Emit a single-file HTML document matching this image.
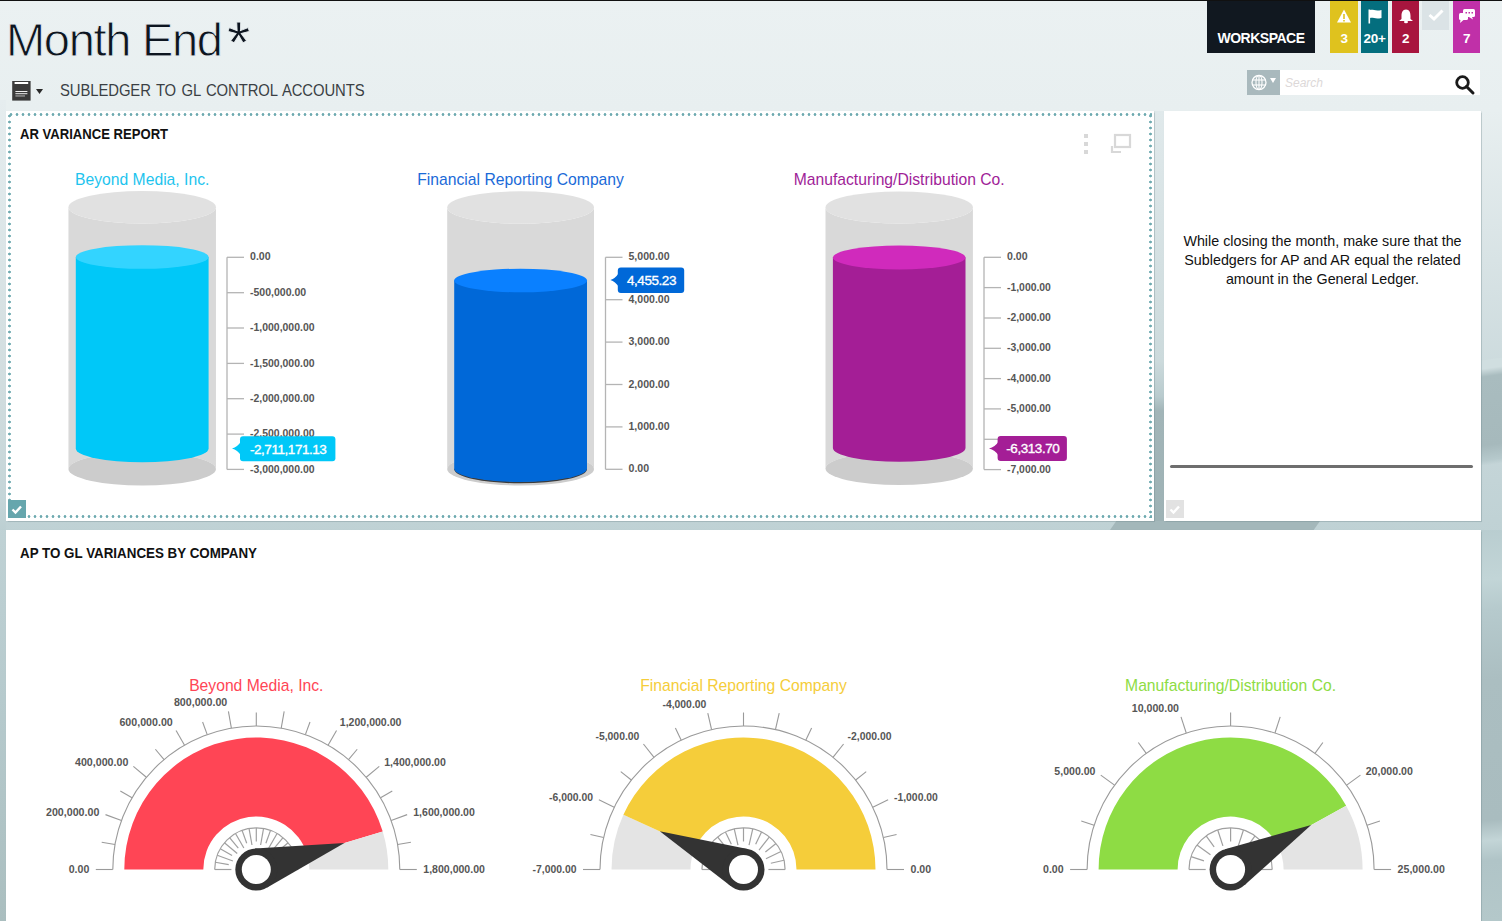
<!DOCTYPE html><html><head><meta charset="utf-8"><style>
*{margin:0;padding:0;box-sizing:border-box}
html,body{width:1502px;height:921px;overflow:hidden}
body{position:relative;font-family:"Liberation Sans",sans-serif;
background:linear-gradient(180deg,#ebf1f2 0px,#e8eff0 110px,#d8e3e5 260px,#c9d8db 400px,#c0d2d5 520px,#b6cacd 700px,#aabebf 921px);}
.abs{position:absolute}
.panel{position:absolute;background:#fff;box-shadow:0 0 1px 0.5px rgba(110,135,140,.35)}
</style></head><body><div class="abs" style="left:6px;top:13px;font-size:47px;line-height:54px;color:#0d1520;letter-spacing:-1.3px;white-space:nowrap;-webkit-text-stroke:0.85px #e9eff1">Month End</div><div class="abs" style="left:227px;top:16px;font-size:60px;line-height:54px;color:#0d1520;-webkit-text-stroke:0.8px #e9eff1">*</div><svg class="abs" style="left:10px;top:79px" width="40" height="24" viewBox="0 0 40 24"><rect x="2.2" y="2" width="18.4" height="19.6" fill="#3a3a3a"/><rect x="4.6" y="3" width="13.6" height="2" fill="#fff"/><rect x="5.4" y="12" width="12" height="1" fill="#eee"/><rect x="5.4" y="14.2" width="12" height="1" fill="#eee"/><rect x="5.4" y="16.4" width="9.6" height="1.1" fill="#aaa"/><path d="M26 10 L33 10 L29.5 15 Z" fill="#2a2a2a"/></svg><div class="abs" style="left:60px;top:80px;font-size:16.5px;line-height:20px;color:#3a3f44;white-space:nowrap;letter-spacing:-0.1px;word-spacing:1.5px;transform:scaleX(0.9);transform-origin:0 0">SUBLEDGER TO GL CONTROL ACCOUNTS</div><div class="abs" style="left:1207px;top:0;width:108px;height:53px;background:#111820;color:#fff;font-weight:bold;font-size:14px;text-align:center;line-height:14px;padding-top:31px;letter-spacing:-0.5px">WORKSPACE</div><div class="abs" style="left:1330px;top:0;width:28px;height:53px;background:#dfc21e"><svg class="abs" style="left:6px;top:8px" width="16" height="16" viewBox="0 0 16 16"><path d="M8 1.5 L15 14.5 L1 14.5 Z" fill="#fff"/><rect x="7.2" y="6" width="1.6" height="5" fill="#dfc21e"/><rect x="7.2" y="12" width="1.6" height="1.5" fill="#dfc21e"/></svg><div class="abs" style="left:0;top:30px;width:28px;text-align:center;color:#fff;font-size:13.5px;font-weight:bold;line-height:16px;margin-top:1px;letter-spacing:-0.3px">3</div></div><div class="abs" style="left:1361px;top:0;width:27px;height:53px;background:#046e7e"><svg class="abs" style="left:6px;top:8px" width="16" height="16" viewBox="0 0 16 16"><rect x="1.5" y="1.5" width="1.6" height="14" fill="#fff"/><path d="M3 2 C6 1,8 3.5,14.5 2 L14.5 10 C8 11.5,6 9,3 10 Z" fill="#fff"/></svg><div class="abs" style="left:0;top:30px;width:27px;text-align:center;color:#fff;font-size:13.5px;font-weight:bold;line-height:16px;margin-top:1px;letter-spacing:-0.3px">20+</div></div><div class="abs" style="left:1392px;top:0;width:27px;height:53px;background:#a8153e"><svg class="abs" style="left:5px;top:8px" width="18" height="16" viewBox="0 0 18 16"><path d="M9 1.5 C5.5 1.5,4.5 4.5,4.5 8 L4.5 11 L2 13 L16 13 L13.5 11 L13.5 8 C13.5 4.5,12.5 1.5,9 1.5 Z" fill="#fff"/><ellipse cx="9" cy="14" rx="2" ry="1.3" fill="#fff"/></svg><div class="abs" style="left:0;top:30px;width:27px;text-align:center;color:#fff;font-size:13.5px;font-weight:bold;line-height:16px;margin-top:1px;letter-spacing:-0.3px">2</div></div><div class="abs" style="left:1422px;top:0;width:27px;height:30px;background:#dbe3e6"><svg class="abs" style="left:6px;top:8px" width="16" height="14" viewBox="0 0 16 14"><path d="M1.5 7 L6 11 L14.5 2.5" stroke="#fff" stroke-width="3" fill="none"/></svg></div><div class="abs" style="left:1453px;top:0;width:27px;height:53px;background:#c030a8"><svg class="abs" style="left:5px;top:8px" width="18" height="16" viewBox="0 0 18 16"><rect x="5" y="1" width="12" height="8" rx="1.5" fill="#fff"/><path d="M14 9 L15 11.5 L11 9Z" fill="#fff"/><rect x="1" y="5" width="9" height="7" rx="1.5" fill="#fff"/><path d="M2.5 12 L2 15 L5.5 12Z" fill="#fff"/><rect x="7.5" y="4" width="1.5" height="1.5" fill="#c030a8"/><rect x="10.5" y="4" width="1.5" height="1.5" fill="#c030a8"/><rect x="13.5" y="4" width="1.5" height="1.5" fill="#c030a8"/></svg><div class="abs" style="left:0;top:30px;width:27px;text-align:center;color:#fff;font-size:13.5px;font-weight:bold;line-height:16px;margin-top:1px;letter-spacing:-0.3px">7</div></div><div class="abs" style="left:0;top:0;width:1502px;height:1px;background:#111"></div><div class="abs" style="left:1247px;top:70px;width:233px;height:25px;background:#fff"></div><div class="abs" style="left:1247px;top:70px;width:33px;height:25px;background:#a9b9bd"></div><svg class="abs" style="left:1250px;top:73px" width="34" height="20" viewBox="0 0 34 20"><circle cx="9" cy="9.5" r="7" fill="none" stroke="#fff" stroke-width="1.3"/><ellipse cx="9" cy="9.5" rx="3" ry="7" fill="none" stroke="#fff" stroke-width="1.1"/><line x1="2" y1="7" x2="16" y2="7" stroke="#fff" stroke-width="1.1"/><line x1="2" y1="12" x2="16" y2="12" stroke="#fff" stroke-width="1.1"/><line x1="9" y1="2.5" x2="9" y2="16.5" stroke="#fff" stroke-width="1.1"/><path d="M20 5 L26 5 L23 10Z" fill="#fff"/></svg><div class="abs" style="left:1285px;top:76px;font-size:12px;line-height:15px;color:#dcd8d8;font-style:italic">Search</div><svg class="abs" style="left:1454px;top:74px" width="22" height="22" viewBox="0 0 22 22"><circle cx="8.5" cy="8.5" r="5.8" fill="none" stroke="#1a1a1a" stroke-width="2.8"/><line x1="12.5" y1="12.5" x2="19" y2="19" stroke="#1a1a1a" stroke-width="3" stroke-linecap="round"/></svg><div class="abs" style="left:0;top:100px;width:6px;height:430px;background:linear-gradient(180deg,#e6edef 0px,#dbe5e7 150px,#d0dcde 300px,#c4d5d8 400px,#bccfd2 430px)"></div><div class="abs" style="left:1481px;top:530px;width:21px;height:391px;background:linear-gradient(175deg,#b9cdd0 0px,#c2d5d7 50px,#b6cacd 80px,#abbec1 150px,#a9bcbf 290px,#c3d5d7 310px,#b0c4c7 330px,#b4c8ca 391px)"></div><div class="abs" style="left:1154px;top:111px;width:10px;height:410px;background:linear-gradient(180deg,#e0e9eb 0px,#ccdadc 250px,#b9cbce 285px,#a2b5b8 300px,#9eb2b5 410px)"></div><div class="abs" style="left:1481px;top:355px;width:21px;height:110px;background:linear-gradient(172deg,rgba(0,0,0,0) 0px,rgba(0,0,0,0) 5px,#d0dee0 6px,#d0dee0 14px,#a9bcbf 22px,#a6b9bc 90px,#b6c9cc 105px,rgba(0,0,0,0) 110px)"></div><div class="abs" style="left:1110px;top:521px;width:210px;height:9px;background:#a3b7ba;clip-path:polygon(3% 0,100% 0,97% 100%,0 100%)"></div><div class="panel" style="left:6px;top:111px;width:1148px;height:410px"></div><div class="abs" style="left:8px;top:113px;width:1144px;height:405px;background:radial-gradient(circle,#6eaab0 1.0px,rgba(110,170,176,0) 1.75px) 0 0/6px 3px repeat-x,radial-gradient(circle,#6eaab0 1.0px,rgba(110,170,176,0) 1.75px) 0 100%/6px 3px repeat-x,radial-gradient(circle,#6eaab0 1.0px,rgba(110,170,176,0) 1.75px) 0 0/3px 6px repeat-y,radial-gradient(circle,#6eaab0 1.0px,rgba(110,170,176,0) 1.75px) 100% 0/3px 6px repeat-y"></div><div class="abs" style="left:20px;top:126px;font-size:14px;line-height:16px;font-weight:bold;color:#111;white-space:nowrap;transform:scaleX(0.935);transform-origin:0 0">AR VARIANCE REPORT</div><svg class="abs" style="left:1080px;top:130px" width="60" height="30" viewBox="0 0 60 30"><rect x="4" y="4" width="4" height="4" fill="#d8d8d8"/><rect x="4" y="12" width="4" height="4" fill="#d8d8d8"/><rect x="4" y="20" width="4" height="4" fill="#d8d8d8"/><rect x="35" y="5" width="15" height="12" fill="none" stroke="#d8d8d8" stroke-width="2.2"/><path d="M32 16 L32 22 L41 22" fill="none" stroke="#d8d8d8" stroke-width="2.2"/></svg><div class="abs" style="left:8px;top:500px;width:18px;height:18px;background:#66a6ad"></div><svg class="abs" style="left:8px;top:500px" width="18" height="18" viewBox="0 0 18 18"><path d="M4.5 9.5 L7.5 12.5 L13 6.5" stroke="#fff" stroke-width="2.4" fill="none"/></svg><div class="panel" style="left:1164px;top:111px;width:317px;height:410px"></div><div class="abs" style="left:1164px;top:232px;width:317px;text-align:center;font-size:14.3px;line-height:19px;color:#111">While closing the month, make sure that the<br>Subledgers for AP and AR equal the related<br>amount in the General Ledger.</div><div class="abs" style="left:1170px;top:465px;width:303px;height:3px;border-radius:2px;background:#6e6e6e"></div><div class="abs" style="left:1166px;top:500px;width:18px;height:18px;background:#e2e2e2"></div><svg class="abs" style="left:1166px;top:500px" width="18" height="18" viewBox="0 0 18 18"><path d="M4.5 9.5 L7.5 12.5 L13 6.5" stroke="#fff" stroke-width="2.4" fill="none"/></svg><div class="panel" style="left:6px;top:530px;width:1475px;height:400px"></div><div class="abs" style="left:20px;top:545px;font-size:14px;line-height:16px;font-weight:bold;color:#111;transform:scaleX(0.955);transform-origin:0 0;white-space:nowrap">AP TO GL VARIANCES BY COMPANY</div><svg class="abs" style="left:0;top:0" width="1502" height="921" viewBox="0 0 1502 921"><path d="M68.45 207.30 L68.45 469.00 A73.75 16.50 0 0 1 215.95 469.00 L215.95 207.30 A73.75 16.20 0 0 1 68.45 207.30 Z" fill="#d9d9d9"/><ellipse cx="142.20" cy="469.00" rx="73.75" ry="16.50" fill="#cccccc"/><ellipse cx="142.20" cy="207.30" rx="73.75" ry="16.20" fill="#e1e1e1"/><path d="M75.80 257.00 L75.80 448.50 A66.40 13.70 0 0 0 208.60 448.50 L208.60 257.00 Z" fill="#00c8f8"/><ellipse cx="142.20" cy="257.00" rx="66.40" ry="11.80" fill="#33d4ff"/><text x="142.20" y="184.70" text-anchor="middle" font-family="Liberation Sans" font-size="15.7" fill="#1ec4ee">Beyond Media, Inc.</text><path d="M227.0 257.3 L227.0 469.4" stroke="#b4b4b4" stroke-width="1.3" fill="none"/><path d="M227.0 257.3 L244.0 257.3" stroke="#b4b4b4" stroke-width="1.3" fill="none"/><text x="250.0" y="260.4" font-family="Liberation Sans" font-weight="bold" font-size="10" fill="#565656" textLength="20.6" lengthAdjust="spacingAndGlyphs">0.00</text><path d="M227.0 292.7 L244.0 292.7" stroke="#b4b4b4" stroke-width="1.3" fill="none"/><text x="250.0" y="295.8" font-family="Liberation Sans" font-weight="bold" font-size="10" fill="#565656" textLength="56.2" lengthAdjust="spacingAndGlyphs">-500,000.00</text><path d="M227.0 328.0 L244.0 328.0" stroke="#b4b4b4" stroke-width="1.3" fill="none"/><text x="250.0" y="331.1" font-family="Liberation Sans" font-weight="bold" font-size="10" fill="#565656" textLength="64.5" lengthAdjust="spacingAndGlyphs">-1,000,000.00</text><path d="M227.0 363.4 L244.0 363.4" stroke="#b4b4b4" stroke-width="1.3" fill="none"/><text x="250.0" y="366.5" font-family="Liberation Sans" font-weight="bold" font-size="10" fill="#565656" textLength="64.5" lengthAdjust="spacingAndGlyphs">-1,500,000.00</text><path d="M227.0 398.7 L244.0 398.7" stroke="#b4b4b4" stroke-width="1.3" fill="none"/><text x="250.0" y="401.8" font-family="Liberation Sans" font-weight="bold" font-size="10" fill="#565656" textLength="64.5" lengthAdjust="spacingAndGlyphs">-2,000,000.00</text><path d="M227.0 434.1 L244.0 434.1" stroke="#b4b4b4" stroke-width="1.3" fill="none"/><text x="250.0" y="437.2" font-family="Liberation Sans" font-weight="bold" font-size="10" fill="#565656" textLength="64.5" lengthAdjust="spacingAndGlyphs">-2,500,000.00</text><path d="M227.0 469.4 L244.0 469.4" stroke="#b4b4b4" stroke-width="1.3" fill="none"/><text x="250.0" y="472.5" font-family="Liberation Sans" font-weight="bold" font-size="10" fill="#565656" textLength="64.5" lengthAdjust="spacingAndGlyphs">-3,000,000.00</text><rect x="240.0" y="436.3" width="95.4" height="25.0" rx="3" fill="#00c8f8"/><path d="M241.0 441.6 Q237.5 447.1 232.0 448.6 Q237.5 450.1 241.0 455.6 Z" fill="#00c8f8"/><text x="288.2" y="453.7" text-anchor="middle" font-family="Liberation Sans" font-size="13.5" letter-spacing="-0.45" fill="#fff" stroke="#fff" stroke-width="0.35">-2,711,171.13</text><path d="M447.20 207.50 L447.20 469.00 A73.40 16.50 0 0 1 594.00 469.00 L594.00 207.50 A73.40 16.20 0 0 1 447.20 207.50 Z" fill="#d9d9d9"/><ellipse cx="520.60" cy="469.00" rx="73.40" ry="16.50" fill="#cccccc"/><ellipse cx="520.60" cy="207.50" rx="73.40" ry="16.20" fill="#e1e1e1"/><path d="M455.00 468.80 A65.60 13.60 0 0 0 586.20 468.80" fill="none" stroke="#2b2b2b" stroke-width="1.8" opacity=".9"/><path d="M454.20 280.50 L454.20 468.50 A66.40 13.50 0 0 0 587.00 468.50 L587.00 280.50 Z" fill="#0068d8"/><ellipse cx="520.60" cy="280.50" rx="66.40" ry="11.80" fill="#0a80ff"/><text x="520.60" y="184.70" text-anchor="middle" font-family="Liberation Sans" font-size="15.7" fill="#1a6ad8">Financial Reporting Company</text><path d="M605.5 257.3 L605.5 469.3" stroke="#b4b4b4" stroke-width="1.3" fill="none"/><path d="M605.5 257.3 L622.5 257.3" stroke="#b4b4b4" stroke-width="1.3" fill="none"/><text x="628.5" y="260.4" font-family="Liberation Sans" font-weight="bold" font-size="10" fill="#565656" textLength="41.1" lengthAdjust="spacingAndGlyphs">5,000.00</text><path d="M605.5 299.7 L622.5 299.7" stroke="#b4b4b4" stroke-width="1.3" fill="none"/><text x="628.5" y="302.8" font-family="Liberation Sans" font-weight="bold" font-size="10" fill="#565656" textLength="41.1" lengthAdjust="spacingAndGlyphs">4,000.00</text><path d="M605.5 342.1 L622.5 342.1" stroke="#b4b4b4" stroke-width="1.3" fill="none"/><text x="628.5" y="345.2" font-family="Liberation Sans" font-weight="bold" font-size="10" fill="#565656" textLength="41.1" lengthAdjust="spacingAndGlyphs">3,000.00</text><path d="M605.5 384.5 L622.5 384.5" stroke="#b4b4b4" stroke-width="1.3" fill="none"/><text x="628.5" y="387.6" font-family="Liberation Sans" font-weight="bold" font-size="10" fill="#565656" textLength="41.1" lengthAdjust="spacingAndGlyphs">2,000.00</text><path d="M605.5 426.9 L622.5 426.9" stroke="#b4b4b4" stroke-width="1.3" fill="none"/><text x="628.5" y="430.0" font-family="Liberation Sans" font-weight="bold" font-size="10" fill="#565656" textLength="41.1" lengthAdjust="spacingAndGlyphs">1,000.00</text><path d="M605.5 469.3 L622.5 469.3" stroke="#b4b4b4" stroke-width="1.3" fill="none"/><text x="628.5" y="472.4" font-family="Liberation Sans" font-weight="bold" font-size="10" fill="#565656" textLength="20.6" lengthAdjust="spacingAndGlyphs">0.00</text><rect x="617.8" y="267.5" width="66.4" height="25.5" rx="3" fill="#0068d8"/><path d="M618.8 273.0 Q615.3 278.5 610.4 280.0 Q615.3 281.5 618.8 287.0 Z" fill="#0068d8"/><text x="651.5" y="285.1" text-anchor="middle" font-family="Liberation Sans" font-size="13.5" letter-spacing="-0.45" fill="#fff" stroke="#fff" stroke-width="0.35">4,455.23</text><path d="M825.50 207.50 L825.50 468.50 A73.70 16.50 0 0 1 972.90 468.50 L972.90 207.50 A73.70 16.10 0 0 1 825.50 207.50 Z" fill="#d9d9d9"/><ellipse cx="899.20" cy="468.50" rx="73.70" ry="16.50" fill="#cccccc"/><ellipse cx="899.20" cy="207.50" rx="73.70" ry="16.10" fill="#e1e1e1"/><path d="M832.90 257.50 L832.90 448.00 A66.30 13.70 0 0 0 965.50 448.00 L965.50 257.50 Z" fill="#a41e96"/><ellipse cx="899.20" cy="257.50" rx="66.30" ry="12.00" fill="#d02abc"/><text x="899.20" y="184.70" text-anchor="middle" font-family="Liberation Sans" font-size="15.7" fill="#a01e98">Manufacturing/Distribution Co.</text><path d="M984.0 257.3 L984.0 469.6" stroke="#b4b4b4" stroke-width="1.3" fill="none"/><path d="M984.0 257.3 L1001.0 257.3" stroke="#b4b4b4" stroke-width="1.3" fill="none"/><text x="1007.0" y="260.4" font-family="Liberation Sans" font-weight="bold" font-size="10" fill="#565656" textLength="20.6" lengthAdjust="spacingAndGlyphs">0.00</text><path d="M984.0 287.6 L1001.0 287.6" stroke="#b4b4b4" stroke-width="1.3" fill="none"/><text x="1007.0" y="290.7" font-family="Liberation Sans" font-weight="bold" font-size="10" fill="#565656" textLength="43.9" lengthAdjust="spacingAndGlyphs">-1,000.00</text><path d="M984.0 318.0 L1001.0 318.0" stroke="#b4b4b4" stroke-width="1.3" fill="none"/><text x="1007.0" y="321.1" font-family="Liberation Sans" font-weight="bold" font-size="10" fill="#565656" textLength="43.9" lengthAdjust="spacingAndGlyphs">-2,000.00</text><path d="M984.0 348.3 L1001.0 348.3" stroke="#b4b4b4" stroke-width="1.3" fill="none"/><text x="1007.0" y="351.4" font-family="Liberation Sans" font-weight="bold" font-size="10" fill="#565656" textLength="43.9" lengthAdjust="spacingAndGlyphs">-3,000.00</text><path d="M984.0 378.6 L1001.0 378.6" stroke="#b4b4b4" stroke-width="1.3" fill="none"/><text x="1007.0" y="381.7" font-family="Liberation Sans" font-weight="bold" font-size="10" fill="#565656" textLength="43.9" lengthAdjust="spacingAndGlyphs">-4,000.00</text><path d="M984.0 408.9 L1001.0 408.9" stroke="#b4b4b4" stroke-width="1.3" fill="none"/><text x="1007.0" y="412.1" font-family="Liberation Sans" font-weight="bold" font-size="10" fill="#565656" textLength="43.9" lengthAdjust="spacingAndGlyphs">-5,000.00</text><path d="M984.0 439.3 L1001.0 439.3" stroke="#b4b4b4" stroke-width="1.3" fill="none"/><path d="M984.0 469.6 L1001.0 469.6" stroke="#b4b4b4" stroke-width="1.3" fill="none"/><text x="1007.0" y="472.7" font-family="Liberation Sans" font-weight="bold" font-size="10" fill="#565656" textLength="43.9" lengthAdjust="spacingAndGlyphs">-7,000.00</text><rect x="997.6" y="436.0" width="69.3" height="25.0" rx="3" fill="#a41e96"/><path d="M998.6 441.6 Q995.1 447.1 989.0 448.6 Q995.1 450.1 998.6 455.6 Z" fill="#a41e96"/><text x="1032.8" y="453.4" text-anchor="middle" font-family="Liberation Sans" font-size="13.5" letter-spacing="-0.45" fill="#fff" stroke="#fff" stroke-width="0.35">-6,313.70</text><path d="M124.30 869.50 A132 132 0 0 1 382.73 831.57 L307.06 854.27 A53 53 0 0 0 203.30 869.50 Z" fill="#ff4555"/><path d="M382.73 831.57 A132 132 0 0 1 388.30 869.50 L309.30 869.50 A53 53 0 0 0 307.06 854.27 Z" fill="#e4e4e4"/><path d="M112.80 869.50 A143.5 143.5 0 0 1 399.80 869.50" fill="none" stroke="#9a9a9a" stroke-width="1.1"/><path d="M112.80 869.50 L95.80 869.50" stroke="#9a9a9a" stroke-width="1.1"/><path d="M114.98 844.58 L101.69 842.24" stroke="#9a9a9a" stroke-width="1.1"/><path d="M121.45 820.42 L105.48 814.61" stroke="#9a9a9a" stroke-width="1.1"/><path d="M132.03 797.75 L120.33 791.00" stroke="#9a9a9a" stroke-width="1.1"/><path d="M146.37 777.26 L133.35 766.33" stroke="#9a9a9a" stroke-width="1.1"/><path d="M164.06 759.57 L155.38 749.23" stroke="#9a9a9a" stroke-width="1.1"/><path d="M184.55 745.23 L176.05 730.50" stroke="#9a9a9a" stroke-width="1.1"/><path d="M207.22 734.65 L202.60 721.97" stroke="#9a9a9a" stroke-width="1.1"/><path d="M231.38 728.18 L228.43 711.44" stroke="#9a9a9a" stroke-width="1.1"/><path d="M256.30 726.00 L256.30 712.50" stroke="#9a9a9a" stroke-width="1.1"/><path d="M281.22 728.18 L284.17 711.44" stroke="#9a9a9a" stroke-width="1.1"/><path d="M305.38 734.65 L310.00 721.97" stroke="#9a9a9a" stroke-width="1.1"/><path d="M328.05 745.23 L336.55 730.50" stroke="#9a9a9a" stroke-width="1.1"/><path d="M348.54 759.57 L357.22 749.23" stroke="#9a9a9a" stroke-width="1.1"/><path d="M366.23 777.26 L379.25 766.33" stroke="#9a9a9a" stroke-width="1.1"/><path d="M380.57 797.75 L392.27 791.00" stroke="#9a9a9a" stroke-width="1.1"/><path d="M391.15 820.42 L407.12 814.61" stroke="#9a9a9a" stroke-width="1.1"/><path d="M397.62 844.58 L410.91 842.24" stroke="#9a9a9a" stroke-width="1.1"/><path d="M399.80 869.50 L416.80 869.50" stroke="#9a9a9a" stroke-width="1.1"/><text x="89.30" y="873.00" text-anchor="end" font-family="Liberation Sans" font-weight="bold" font-size="10" fill="#565656" textLength="20.6" lengthAdjust="spacingAndGlyphs">0.00</text><text x="99.37" y="815.88" text-anchor="end" font-family="Liberation Sans" font-weight="bold" font-size="10" fill="#565656" textLength="53.4" lengthAdjust="spacingAndGlyphs">200,000.00</text><text x="128.37" y="765.65" text-anchor="end" font-family="Liberation Sans" font-weight="bold" font-size="10" fill="#565656" textLength="53.4" lengthAdjust="spacingAndGlyphs">400,000.00</text><text x="172.80" y="726.07" text-anchor="end" font-family="Liberation Sans" font-weight="bold" font-size="10" fill="#565656" textLength="53.4" lengthAdjust="spacingAndGlyphs">600,000.00</text><text x="227.30" y="706.24" text-anchor="end" font-family="Liberation Sans" font-weight="bold" font-size="10" fill="#565656" textLength="53.4" lengthAdjust="spacingAndGlyphs">800,000.00</text><text x="339.80" y="726.07" text-anchor="start" font-family="Liberation Sans" font-weight="bold" font-size="10" fill="#565656" textLength="61.6" lengthAdjust="spacingAndGlyphs">1,200,000.00</text><text x="384.23" y="765.65" text-anchor="start" font-family="Liberation Sans" font-weight="bold" font-size="10" fill="#565656" textLength="61.6" lengthAdjust="spacingAndGlyphs">1,400,000.00</text><text x="413.23" y="815.88" text-anchor="start" font-family="Liberation Sans" font-weight="bold" font-size="10" fill="#565656" textLength="61.6" lengthAdjust="spacingAndGlyphs">1,600,000.00</text><text x="423.30" y="873.00" text-anchor="start" font-family="Liberation Sans" font-weight="bold" font-size="10" fill="#565656" textLength="61.6" lengthAdjust="spacingAndGlyphs">1,800,000.00</text><path d="M214.70 869.50 A41.6 41.6 0 0 1 297.90 869.50" fill="none" stroke="#a0a0a0" stroke-width="1.2"/><path d="M214.70 869.50 L231.40 869.50" stroke="#a0a0a0" stroke-width="1.2"/><path d="M215.33 862.28 L228.73 864.64" stroke="#a0a0a0" stroke-width="1.2"/><path d="M217.21 855.27 L232.90 860.98" stroke="#a0a0a0" stroke-width="1.2"/><path d="M220.27 848.70 L232.05 855.50" stroke="#a0a0a0" stroke-width="1.2"/><path d="M224.43 842.76 L237.23 853.49" stroke="#a0a0a0" stroke-width="1.2"/><path d="M229.56 837.63 L238.30 848.05" stroke="#a0a0a0" stroke-width="1.2"/><path d="M235.50 833.47 L243.85 847.94" stroke="#a0a0a0" stroke-width="1.2"/><path d="M242.07 830.41 L246.72 843.19" stroke="#a0a0a0" stroke-width="1.2"/><path d="M249.08 828.53 L251.98 844.98" stroke="#a0a0a0" stroke-width="1.2"/><path d="M256.30 827.90 L256.30 841.50" stroke="#a0a0a0" stroke-width="1.2"/><path d="M263.52 828.53 L260.62 844.98" stroke="#a0a0a0" stroke-width="1.2"/><path d="M270.53 830.41 L265.88 843.19" stroke="#a0a0a0" stroke-width="1.2"/><path d="M277.10 833.47 L268.75 847.94" stroke="#a0a0a0" stroke-width="1.2"/><path d="M283.04 837.63 L274.30 848.05" stroke="#a0a0a0" stroke-width="1.2"/><path d="M288.17 842.76 L275.37 853.49" stroke="#a0a0a0" stroke-width="1.2"/><path d="M292.33 848.70 L280.55 855.50" stroke="#a0a0a0" stroke-width="1.2"/><path d="M295.39 855.27 L279.70 860.98" stroke="#a0a0a0" stroke-width="1.2"/><path d="M297.27 862.28 L283.87 864.64" stroke="#a0a0a0" stroke-width="1.2"/><path d="M297.90 869.50 L281.20 869.50" stroke="#a0a0a0" stroke-width="1.2"/><path d="M255.02 848.54 L344.42 843.06 L266.77 887.71 Z" fill="#333"/><circle cx="256.30" cy="869.50" r="21.0" fill="#333"/><circle cx="256.30" cy="869.50" r="14.5" fill="#fff"/><text x="256.30" y="690.6" text-anchor="middle" font-family="Liberation Sans" font-size="15.7" fill="#ff4555">Beyond Media, Inc.</text><path d="M611.50 869.50 A132 132 0 0 1 623.39 814.76 L695.27 847.52 A53 53 0 0 0 690.50 869.50 Z" fill="#e4e4e4"/><path d="M623.39 814.76 A132 132 0 0 1 875.50 869.50 L796.50 869.50 A53 53 0 0 0 695.27 847.52 Z" fill="#f5cd3a"/><path d="M600.00 869.50 A143.5 143.5 0 0 1 887.00 869.50" fill="none" stroke="#9a9a9a" stroke-width="1.1"/><path d="M600.00 869.50 L583.00 869.50" stroke="#9a9a9a" stroke-width="1.1"/><path d="M603.60 837.57 L590.44 834.56" stroke="#9a9a9a" stroke-width="1.1"/><path d="M614.21 807.24 L598.89 799.86" stroke="#9a9a9a" stroke-width="1.1"/><path d="M631.31 780.03 L620.75 771.61" stroke="#9a9a9a" stroke-width="1.1"/><path d="M654.03 757.31 L643.43 744.02" stroke="#9a9a9a" stroke-width="1.1"/><path d="M681.24 740.21 L675.38 728.05" stroke="#9a9a9a" stroke-width="1.1"/><path d="M711.57 729.60 L707.79 713.02" stroke="#9a9a9a" stroke-width="1.1"/><path d="M743.50 726.00 L743.50 712.50" stroke="#9a9a9a" stroke-width="1.1"/><path d="M775.43 729.60 L779.21 713.02" stroke="#9a9a9a" stroke-width="1.1"/><path d="M805.76 740.21 L811.62 728.05" stroke="#9a9a9a" stroke-width="1.1"/><path d="M832.97 757.31 L843.57 744.02" stroke="#9a9a9a" stroke-width="1.1"/><path d="M855.69 780.03 L866.25 771.61" stroke="#9a9a9a" stroke-width="1.1"/><path d="M872.79 807.24 L888.11 799.86" stroke="#9a9a9a" stroke-width="1.1"/><path d="M883.40 837.57 L896.56 834.56" stroke="#9a9a9a" stroke-width="1.1"/><path d="M887.00 869.50 L904.00 869.50" stroke="#9a9a9a" stroke-width="1.1"/><text x="576.50" y="873.00" text-anchor="end" font-family="Liberation Sans" font-weight="bold" font-size="10" fill="#565656" textLength="43.9" lengthAdjust="spacingAndGlyphs">-7,000.00</text><text x="593.04" y="800.54" text-anchor="end" font-family="Liberation Sans" font-weight="bold" font-size="10" fill="#565656" textLength="43.9" lengthAdjust="spacingAndGlyphs">-6,000.00</text><text x="639.38" y="740.13" text-anchor="end" font-family="Liberation Sans" font-weight="bold" font-size="10" fill="#565656" textLength="43.9" lengthAdjust="spacingAndGlyphs">-5,000.00</text><text x="706.34" y="707.89" text-anchor="end" font-family="Liberation Sans" font-weight="bold" font-size="10" fill="#565656" textLength="43.9" lengthAdjust="spacingAndGlyphs">-4,000.00</text><text x="847.62" y="740.13" text-anchor="start" font-family="Liberation Sans" font-weight="bold" font-size="10" fill="#565656" textLength="43.9" lengthAdjust="spacingAndGlyphs">-2,000.00</text><text x="893.96" y="800.54" text-anchor="start" font-family="Liberation Sans" font-weight="bold" font-size="10" fill="#565656" textLength="43.9" lengthAdjust="spacingAndGlyphs">-1,000.00</text><text x="910.50" y="873.00" text-anchor="start" font-family="Liberation Sans" font-weight="bold" font-size="10" fill="#565656" textLength="20.6" lengthAdjust="spacingAndGlyphs">0.00</text><path d="M701.90 869.50 A41.6 41.6 0 0 1 785.10 869.50" fill="none" stroke="#a0a0a0" stroke-width="1.2"/><path d="M701.90 869.50 L718.60 869.50" stroke="#a0a0a0" stroke-width="1.2"/><path d="M702.94 860.24 L716.20 863.27" stroke="#a0a0a0" stroke-width="1.2"/><path d="M706.02 851.45 L721.07 858.70" stroke="#a0a0a0" stroke-width="1.2"/><path d="M710.98 843.56 L721.61 852.04" stroke="#a0a0a0" stroke-width="1.2"/><path d="M717.56 836.98 L727.98 850.03" stroke="#a0a0a0" stroke-width="1.2"/><path d="M725.45 832.02 L731.35 844.27" stroke="#a0a0a0" stroke-width="1.2"/><path d="M734.24 828.94 L737.96 845.22" stroke="#a0a0a0" stroke-width="1.2"/><path d="M743.50 827.90 L743.50 841.50" stroke="#a0a0a0" stroke-width="1.2"/><path d="M752.76 828.94 L749.04 845.22" stroke="#a0a0a0" stroke-width="1.2"/><path d="M761.55 832.02 L755.65 844.27" stroke="#a0a0a0" stroke-width="1.2"/><path d="M769.44 836.98 L759.02 850.03" stroke="#a0a0a0" stroke-width="1.2"/><path d="M776.02 843.56 L765.39 852.04" stroke="#a0a0a0" stroke-width="1.2"/><path d="M780.98 851.45 L765.93 858.70" stroke="#a0a0a0" stroke-width="1.2"/><path d="M784.06 860.24 L770.80 863.27" stroke="#a0a0a0" stroke-width="1.2"/><path d="M785.10 869.50 L768.40 869.50" stroke="#a0a0a0" stroke-width="1.2"/><path d="M730.66 886.12 L659.78 831.35 L747.62 848.91 Z" fill="#333"/><circle cx="743.50" cy="869.50" r="21.0" fill="#333"/><circle cx="743.50" cy="869.50" r="14.5" fill="#fff"/><text x="743.50" y="690.6" text-anchor="middle" font-family="Liberation Sans" font-size="15.7" fill="#f5cd3a">Financial Reporting Company</text><path d="M1098.60 869.50 A132 132 0 0 1 1346.16 805.71 L1277.00 843.89 A53 53 0 0 0 1177.60 869.50 Z" fill="#8edc44"/><path d="M1346.16 805.71 A132 132 0 0 1 1362.60 869.50 L1283.60 869.50 A53 53 0 0 0 1277.00 843.89 Z" fill="#e4e4e4"/><path d="M1087.10 869.50 A143.5 143.5 0 0 1 1374.10 869.50" fill="none" stroke="#9a9a9a" stroke-width="1.1"/><path d="M1087.10 869.50 L1070.10 869.50" stroke="#9a9a9a" stroke-width="1.1"/><path d="M1094.12 825.16 L1081.28 820.98" stroke="#9a9a9a" stroke-width="1.1"/><path d="M1114.51 785.15 L1100.75 775.16" stroke="#9a9a9a" stroke-width="1.1"/><path d="M1146.25 753.41 L1138.32 742.48" stroke="#9a9a9a" stroke-width="1.1"/><path d="M1186.26 733.02 L1181.00 716.86" stroke="#9a9a9a" stroke-width="1.1"/><path d="M1230.60 726.00 L1230.60 712.50" stroke="#9a9a9a" stroke-width="1.1"/><path d="M1274.94 733.02 L1280.20 716.86" stroke="#9a9a9a" stroke-width="1.1"/><path d="M1314.95 753.41 L1322.88 742.48" stroke="#9a9a9a" stroke-width="1.1"/><path d="M1346.69 785.15 L1360.45 775.16" stroke="#9a9a9a" stroke-width="1.1"/><path d="M1367.08 825.16 L1379.92 820.98" stroke="#9a9a9a" stroke-width="1.1"/><path d="M1374.10 869.50 L1391.10 869.50" stroke="#9a9a9a" stroke-width="1.1"/><text x="1063.60" y="873.00" text-anchor="end" font-family="Liberation Sans" font-weight="bold" font-size="10" fill="#565656" textLength="20.6" lengthAdjust="spacingAndGlyphs">0.00</text><text x="1095.49" y="774.84" text-anchor="end" font-family="Liberation Sans" font-weight="bold" font-size="10" fill="#565656" textLength="41.1" lengthAdjust="spacingAndGlyphs">5,000.00</text><text x="1178.99" y="711.87" text-anchor="end" font-family="Liberation Sans" font-weight="bold" font-size="10" fill="#565656" textLength="47.2" lengthAdjust="spacingAndGlyphs">10,000.00</text><text x="1365.71" y="774.84" text-anchor="start" font-family="Liberation Sans" font-weight="bold" font-size="10" fill="#565656" textLength="47.2" lengthAdjust="spacingAndGlyphs">20,000.00</text><text x="1397.60" y="873.00" text-anchor="start" font-family="Liberation Sans" font-weight="bold" font-size="10" fill="#565656" textLength="47.2" lengthAdjust="spacingAndGlyphs">25,000.00</text><path d="M1189.00 869.50 A41.6 41.6 0 0 1 1272.20 869.50" fill="none" stroke="#a0a0a0" stroke-width="1.2"/><path d="M1189.00 869.50 L1205.70 869.50" stroke="#a0a0a0" stroke-width="1.2"/><path d="M1191.04 856.64 L1203.97 860.85" stroke="#a0a0a0" stroke-width="1.2"/><path d="M1196.94 845.05 L1210.46 854.86" stroke="#a0a0a0" stroke-width="1.2"/><path d="M1206.15 835.84 L1214.14 846.85" stroke="#a0a0a0" stroke-width="1.2"/><path d="M1217.74 829.94 L1222.91 845.82" stroke="#a0a0a0" stroke-width="1.2"/><path d="M1230.60 827.90 L1230.60 841.50" stroke="#a0a0a0" stroke-width="1.2"/><path d="M1243.46 829.94 L1238.29 845.82" stroke="#a0a0a0" stroke-width="1.2"/><path d="M1255.05 835.84 L1247.06 846.85" stroke="#a0a0a0" stroke-width="1.2"/><path d="M1264.26 845.05 L1250.74 854.86" stroke="#a0a0a0" stroke-width="1.2"/><path d="M1270.16 856.64 L1257.23 860.85" stroke="#a0a0a0" stroke-width="1.2"/><path d="M1272.20 869.50 L1255.50 869.50" stroke="#a0a0a0" stroke-width="1.2"/><path d="M1224.92 849.28 L1311.14 825.04 L1244.68 885.08 Z" fill="#333"/><circle cx="1230.60" cy="869.50" r="21.0" fill="#333"/><circle cx="1230.60" cy="869.50" r="14.5" fill="#fff"/><text x="1230.60" y="690.6" text-anchor="middle" font-family="Liberation Sans" font-size="15.7" fill="#8edc44">Manufacturing/Distribution Co.</text></svg></body></html>
